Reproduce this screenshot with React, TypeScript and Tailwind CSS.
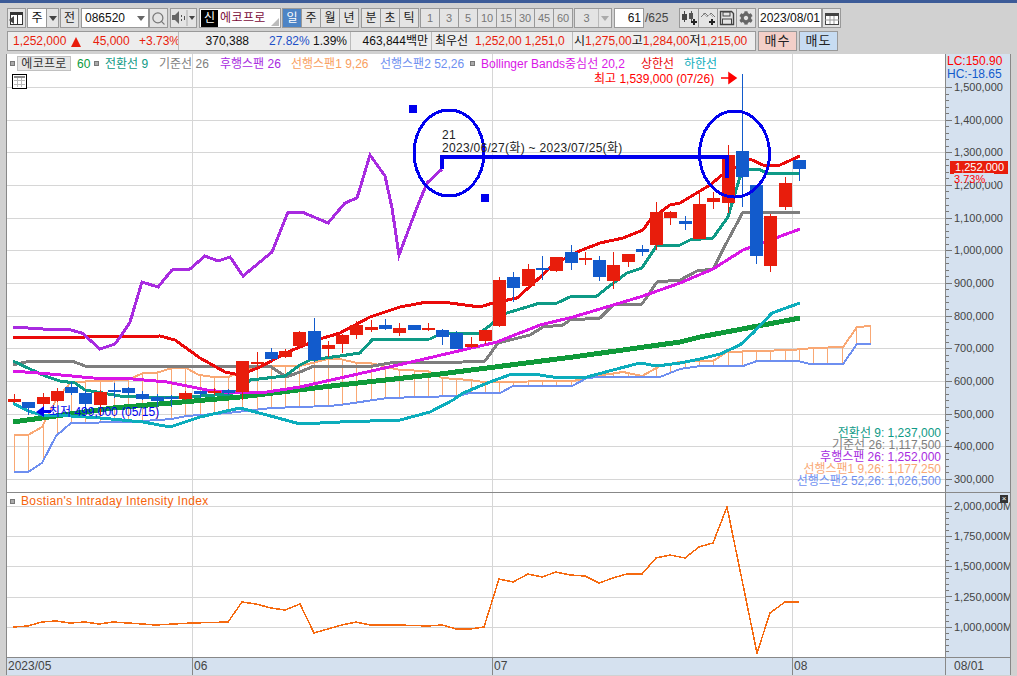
import { Search } from 'lucide-react'
import { FaCog } from 'react-icons/fa'
import type { ReactNode } from 'react'

type Pt = [number, number]

const RED = '#e81d0c'
const BLUE = '#125bcc'

const chartX = (i: number) => Math.round(14 + 14.27 * i)

// top, bottom, high, low, colour of each day (screen y)
const candles: [number, number, number, number, 'r' | 'b'][] = [
  [399, 402, 394, 403, 'r'], [402, 408, 402, 415, 'b'], [397, 404, 393, 407, 'r'], [391, 401, 388, 402, 'r'],
  [387, 393, 382, 395, 'b'], [393, 404, 390, 413, 'b'], [392, 405, 390, 416, 'r'], [390, 392, 383, 398, 'b'],
  [388, 393, 387, 395, 'b'], [394, 399, 391, 400, 'b'], [397, 401, 394, 407, 'b'], [397, 399, 395, 407, 'b'],
  [393, 399, 391, 400, 'r'], [391, 394, 391, 398, 'b'], [391, 393, 388, 395, 'r'], [390, 393, 389, 395, 'b'],
  [361, 392, 361, 400, 'r'], [362, 364, 352, 368, 'r'], [352, 359, 348, 361, 'b'], [351, 357, 349, 358, 'r'],
  [332, 346, 331, 347, 'r'], [331, 360, 318, 362, 'b'], [345, 349, 341, 357, 'r'], [335, 344, 334, 353, 'r'],
  [325, 335, 321, 339, 'r'], [327, 330, 320, 332, 'r'], [325, 329, 319, 330, 'b'], [328, 333, 323, 336, 'r'],
  [325, 330, 325, 330, 'b'], [328, 330, 323, 331, 'r'], [330, 337, 329, 345, 'b'], [333, 349, 331, 349, 'b'],
  [344, 347, 337, 348, 'r'], [330, 341, 330, 344, 'r'], [280, 326, 277, 327, 'r'], [277, 288, 272, 302, 'b'],
  [269, 286, 264, 287, 'r'], [268, 270, 256, 280, 'b'], [257, 271, 257, 272, 'r'], [252, 263, 245, 270, 'b'],
  [258, 260, 252, 265, 'r'], [260, 277, 256, 281, 'b'], [265, 281, 252, 289, 'r'], [254, 262, 254, 267, 'r'],
  [249, 252, 245, 256, 'b'], [212, 245, 202, 250, 'r'], [212, 218, 211, 225, 'r'], [221, 224, 216, 230, 'b'],
  [204, 239, 192, 239, 'r'], [198, 202, 192, 209, 'r'], [155, 203, 145, 213, 'r'], [151, 177, 74, 207, 'b'],
  [185, 256, 185, 264, 'b'], [216, 266, 214, 272, 'r'], [183, 207, 177, 210, 'r'], [160, 169, 160, 181, 'b'],
]

const span1: Pt[] = [[14, 435], [28, 435], [42, 427], [56, 400], [71, 382], [128, 380], [143, 373], [156, 373], [172, 368], [186, 368], [199, 375], [214, 377], [228, 377], [242, 372], [256, 366], [300, 366], [328, 359], [340, 359], [357, 363], [370, 363], [400, 370], [428, 371], [442, 378], [470, 380], [483, 382], [573, 381], [603, 375], [623, 372], [642, 376], [660, 366], [680, 362], [700, 361], [713, 361], [727, 352], [757, 351], [792, 350], [813, 348], [843, 347], [857, 327], [871, 326]]
const span2: Pt[] = [[14, 472], [28, 472], [42, 463], [56, 436], [71, 423], [128, 422], [172, 419], [186, 416], [228, 413], [271, 408], [328, 406], [340, 405], [387, 398], [457, 396], [470, 393], [500, 393], [513, 386], [572, 386], [587, 378], [600, 377], [660, 377], [680, 369], [700, 366], [743, 366], [757, 361], [798, 361], [810, 364], [843, 364], [857, 344], [871, 344]]

const lines: { c: string; w: number; p: Pt[] }[] = [
  { c: '#f9a874', w: 2, p: span1 },
  { c: '#6e8ff0', w: 2, p: span2 },
  { c: '#0f9a3a', w: 5, p: [[13, 422], [113, 408], [240, 397], [340, 385], [440, 374], [573, 357], [680, 342], [700, 337], [800, 318]] },
  { c: '#0cadbc', w: 3, p: [[13, 403], [28, 411], [42, 415], [71, 416], [100, 418], [143, 422], [170, 427], [200, 417], [240, 408], [267, 415], [300, 424], [340, 422], [400, 420], [430, 412], [453, 400], [463, 393], [490, 382], [512, 374], [533, 374], [553, 377], [587, 377], [613, 370], [640, 363], [657, 366], [680, 363], [700, 359], [720, 354], [740, 345], [753, 333], [772, 313], [800, 303]] },
  { c: '#7e7e7e', w: 3, p: [[13, 365], [30, 361], [72, 361], [85, 366], [270, 366], [286, 377], [300, 372], [314, 366], [373, 366], [390, 363], [463, 362], [485, 361], [498, 343], [530, 335], [543, 327], [563, 325], [570, 320], [600, 318], [613, 305], [642, 304], [657, 282], [680, 280], [697, 271], [713, 269], [728, 240], [743, 212], [800, 212]] },
  { c: '#0e9a86', w: 3, p: [[13, 361], [30, 369], [45, 376], [60, 381], [75, 383], [85, 390], [120, 396], [160, 398], [200, 396], [230, 394], [240, 390], [250, 380], [285, 376], [300, 365], [310, 360], [340, 356], [360, 353], [372, 340], [430, 339], [442, 333], [480, 333], [493, 323], [507, 313], [540, 303], [557, 303], [570, 297], [597, 296], [607, 288], [627, 273], [642, 268], [657, 245], [680, 245], [690, 240], [713, 238], [728, 217], [740, 177], [748, 169], [758, 169], [767, 173], [800, 173]] },
  { c: '#d916e6', w: 3, p: [[13, 371], [50, 374], [93, 378], [133, 379], [167, 382], [207, 390], [233, 393], [267, 392], [300, 387], [340, 378], [407, 363], [497, 342], [540, 325], [573, 317], [640, 297], [680, 283], [713, 269], [743, 250], [800, 229]] },
  { c: '#ea0a0a', w: 3, p: [[13, 338], [160, 336], [175, 340], [200, 358], [225, 372], [240, 375], [260, 367], [290, 351], [320, 339], [340, 333], [370, 317], [400, 307], [427, 302], [450, 303], [480, 307], [493, 303], [517, 298], [537, 280], [553, 265], [577, 252], [600, 243], [623, 238], [643, 230], [650, 220], [670, 205], [680, 203], [710, 185], [722, 175], [750, 159], [765, 166], [780, 165], [800, 156]] },
  { c: '#a82be0', w: 3, p: [[13, 327], [43, 329], [67, 329], [82, 333], [100, 349], [115, 344], [123, 333], [130, 322], [142, 282], [158, 287], [172, 270], [190, 269], [205, 256], [218, 261], [230, 257], [243, 276], [272, 252], [288, 212], [302, 212], [328, 223], [345, 203], [357, 198], [370, 155], [385, 176], [392, 208], [399, 255], [416, 210], [427, 183], [442, 169]] },
]

const obv: Pt[] = [[13, 627], [28, 626], [42, 622], [56, 621], [70, 623], [85, 622], [99, 624], [113, 622], [128, 623], [156, 625], [192, 623], [228, 622], [242, 602], [256, 604], [271, 608], [285, 610], [300, 604], [314, 633], [328, 629], [342, 625], [356, 622], [370, 625], [399, 625], [428, 626], [442, 625], [456, 629], [470, 629], [484, 627], [499, 579], [513, 582], [528, 574], [542, 577], [556, 572], [570, 575], [585, 576], [599, 583], [613, 578], [627, 574], [642, 574], [656, 558], [670, 555], [685, 558], [699, 547], [713, 543], [727, 507], [757, 653], [770, 613], [785, 602], [799, 602]]

const priceTicks = ['1,500,000', '1,400,000', '1,300,000', '1,200,000', '1,100,000', '1,000,000', '900,000', '800,000', '700,000', '600,000', '500,000', '400,000', '300,000']
const priceY = (i: number) => Math.round(87 + 32.65 * i)
const lowerTicks: [string, number][] = [['2,000,000M', 506], ['1,750,000M', 536], ['1,500,000M', 566], ['1,250,000M', 597], ['1,000,000M', 627]]

const legend: { t: string; c: string; w: number; box?: boolean }[] = [
  { t: '60', c: '#0a9a3c', w: 17, box: false },
  { t: '전환선 9', c: '#0e9a86', w: 54, box: true },
  { t: '기준선 26', c: '#7e7e7e', w: 61 },
  { t: '후행스팬 26', c: '#a82be0', w: 71 },
  { t: '선행스팬1 9,26', c: '#f9a060', w: 89 },
  { t: '선행스팬2 52,26', c: '#6e8ff0', w: 90 },
  { t: 'Bollinger Bands중심선 20,2', c: '#d916e6', w: 160, box: true },
  { t: '상한선', c: '#ea0a0a', w: 43 },
  { t: '하한선', c: '#0cadbc', w: 40 },
]

const summary: [string, string][] = [
  ['전환선 9: 1,237,000', '#0e9a86'],
  ['기준선 26: 1,117,500', '#7e7e7e'],
  ['후행스팬 26: 1,252,000', '#a82be0'],
  ['선행스팬1 9,26: 1,177,250', '#f9a874'],
  ['선행스팬2 52,26: 1,026,500', '#6e8ff0'],
]

function interp(p: Pt[], x: number) {
  for (let i = 1; i < p.length; i++) {
    if (x <= p[i][0]) {
      const [x0, y0] = p[i - 1]
      const [x1, y1] = p[i]
      return y0 + ((y1 - y0) * (x - x0)) / (x1 - x0)
    }
  }
  return p[p.length - 1][1]
}

const pts = (p: Pt[]) => p.map((q) => q.join(',')).join(' ')

function Btn({ className = '', children }: { className?: string; children?: ReactNode }) {
  return (
    <div className={`h-5 shrink-0 flex items-center justify-center border border-[#999] bg-[#e4e4e4] text-[12px] text-[#222] ${className}`}>
      {children}
    </div>
  )
}

function Arrow({ className = 'border-t-[#444]' }: { className?: string }) {
  return <div className={`w-0 h-0 border-x-[4px] border-x-transparent border-t-[5px] ${className}`} />
}

function Square({ className = '' }: { className?: string }) {
  return <div className={`w-[5px] h-[5px] shrink-0 bg-[#aaa] border border-[#777] ${className}`} />
}

function Toolbar() {
  return (
    <div className="flex items-center pl-[7px] mt-[5px] h-5">
      <Btn className="w-[19px]">
        <svg width="15" height="15" viewBox="0 0 15 15">
          <rect x="1.5" y="1.5" width="12" height="12" fill="#fff" stroke="#333" />
          <rect x="1" y="1" width="13" height="3" fill="#333" />
          <rect x="8" y="4" width="1" height="9" fill="#333" />
          <path d="M0 9l5-4v8z" fill="#444" />
        </svg>
      </Btn>
      <div className="ml-px w-[32px] h-5 shrink-0 flex border border-[#999] bg-white">
        <div className="w-[18px] flex items-center justify-center text-[12px] text-[#111]">주</div>
        <div className="flex-1 bg-[#e4e4e4] border-l border-[#999] flex items-center justify-center">
          <Arrow />
        </div>
      </div>
      <Btn className="w-[19px] ml-[1px]">전</Btn>
      <div className="ml-[2px] w-[68px] h-5 shrink-0 flex items-center justify-between pl-[3px] pr-[3px] border border-[#999] bg-white text-[12px] text-[#111]">
        086520
        <Arrow className="border-t-[#666]" />
      </div>
      <Btn className="w-[19px]">
        <Search size={15} color="#777" strokeWidth={2} />
      </Btn>
      <Btn className="w-[27px] ml-[2px]">
        <svg width="25" height="16" viewBox="0 0 25 16">
          <path d="M1 5h3l4-4v13l-4-4H1z" fill="#666" />
          <rect x="10" y="5" width="1" height="2" fill="#555" />
          <rect x="10" y="9" width="1" height="2" fill="#555" />
          <rect x="13" y="6" width="1" height="4" fill="#555" />
          <rect x="15.5" y="0" width="1" height="16" fill="#aaa" />
          <path d="M18 6h6l-3 4z" fill="#444" />
        </svg>
      </Btn>
      <div className="ml-[2px] w-[82px] h-5 shrink-0 flex items-center border border-[#999] bg-white relative">
        <div className="w-[17px] h-[17px] ml-px bg-black text-white text-[12px] flex items-center justify-center">신</div>
        <div className="ml-[2px] text-[12px] text-[#7a0b3a] tracking-[0.4px]">에코프로</div>
        <div className="absolute right-px bottom-px w-0 h-0 border-l-[8px] border-l-transparent border-b-[8px] border-b-[#bbb]" />
      </div>
      <div className="ml-[1px] flex">
        <Btn className="w-[20px] !bg-[#4d84c5] !text-white">일</Btn>
        {['주', '월', '년'].map((t) => (
          <Btn key={t} className="w-[20px] -ml-px">
            {t}
          </Btn>
        ))}
      </div>
      <div className="ml-[2px] flex">
        {['분', '초', '틱'].map((t) => (
          <Btn key={t} className="w-[20px] -ml-px first:ml-0">
            {t}
          </Btn>
        ))}
      </div>
      <div className="ml-[1px] flex">
        {['1', '3', '5', '10', '15', '30', '45', '60'].map((t) => (
          <Btn key={t} className="w-[20px] -ml-px first:ml-0 !text-[11px] !text-[#777]">
            {t}
          </Btn>
        ))}
      </div>
      <div className="ml-[1px] w-[38px] h-5 shrink-0 flex border border-[#999] bg-[#e4e4e4] text-[#777] text-[11px]">
        <div className="flex-1 flex items-center justify-center">3</div>
        <div className="w-[13px] border-l border-[#bbb] flex items-center justify-center">
          <Arrow className="border-t-[#aaa]" />
        </div>
      </div>
      <div className="ml-[2px] w-[30px] h-5 shrink-0 flex items-center justify-end pr-[2px] border border-[#999] bg-white text-[12px] text-[#111]">61</div>
      <div className="ml-px w-[34px] shrink-0 text-[12px] text-[#444]">/625</div>
      <div className="flex">
        <Btn className="w-[20px]">
          <svg width="17" height="16" viewBox="0 0 17 16">
            <rect x="1" y="4" width="5" height="6" fill="#444" />
            <rect x="3" y="1" width="1" height="11" fill="#444" />
            <rect x="8" y="3" width="4" height="6" fill="#555" />
            <rect x="10" y="1" width="1" height="11" fill="#555" />
            <path d="M13 9v6M10 12h6" stroke="#222" strokeWidth="2" />
          </svg>
        </Btn>
        <Btn className="w-[20px] -ml-px">
          <svg width="17" height="16" viewBox="0 0 17 16">
            <path d="M1 7l4-4 3 3 3-3 4 4" fill="none" stroke="#777" />
            <path d="M3 3l4 4 3-3 3 3" fill="none" stroke="#aaa" />
            <path d="M12 9v6M9 12h6" stroke="#222" strokeWidth="2" />
          </svg>
        </Btn>
        <Btn className="w-[20px] -ml-px">
          <svg width="16" height="16" viewBox="0 0 16 16">
            <path d="M1.5 1.5h11l2 2v11h-13z" fill="#e4e4e4" stroke="#444" strokeWidth="1.4" />
            <rect x="4" y="2" width="7" height="4" fill="none" stroke="#444" />
            <rect x="3.5" y="9" width="9" height="5.5" fill="none" stroke="#444" />
          </svg>
        </Btn>
        <Btn className="w-[20px] -ml-px">
          <FaCog size={14} color="#666" />
        </Btn>
      </div>
      <div className="ml-[2px] w-[64px] h-5 shrink-0 flex items-center justify-center border border-[#999] bg-white text-[12px] text-[#111]">2023/08/01</div>
      <Btn className="w-[19px]">
        <svg width="14" height="13" viewBox="0 0 14 13">
          <rect x="0.5" y="1.5" width="13" height="11" fill="#fff" stroke="#444" />
          <rect x="0" y="1" width="14" height="3" fill="#444" />
          <path d="M0 8h14M5 4v8M9 4v8" stroke="#999" />
        </svg>
      </Btn>
    </div>
  )
}

function QuoteBar() {
  return (
    <div className="flex items-center pl-[7px] mt-[3px] h-5">
      <div className="w-[749px] h-5 shrink-0 flex border border-[#999] bg-[#ededed] text-[12px] leading-[18px] whitespace-nowrap">
        <div className="w-[171px] shrink-0 flex border-r border-[#bbb] text-[#e81d0c] overflow-hidden">
          <span className="ml-[5px] w-[58px] shrink-0">1,252,000</span>
          <span className="w-0 h-0 mt-[5px] shrink-0 border-x-[5px] border-x-transparent border-b-[10px] border-b-[#e81d0c]" />
          <span className="ml-[12px] w-[40px] shrink-0">45,000</span>
          <span className="ml-[5px] w-[42px] shrink-0 text-right">+3.73%</span>
        </div>
        <div className="w-[172px] shrink-0 flex border-r border-[#bbb] text-[#111]">
          <span className="ml-[26px] w-[44px] text-right">370,388</span>
          <span className="ml-[20px] w-[38px] text-[#1d50c8]">27.82%</span>
          <span className="ml-[6px] w-[34px] text-right">1.39%</span>
        </div>
        <div className="w-[81px] shrink-0 border-r border-[#bbb] text-[#111] text-right pr-[3px]">463,844백만</div>
        <div className="w-[141px] shrink-0 flex border-r border-[#bbb] text-[#e81d0c] overflow-hidden">
          <span className="ml-[3px] w-[40px] shrink-0 text-[#111]">최우선</span>
          <span className="shrink-0">1,252,00</span>
          <span className="ml-[3px] shrink-0">1,251,0</span>
        </div>
        <div className="flex-1 flex text-[#e81d0c] overflow-hidden">
          <span className="text-[#111] ml-[1px]">시</span>
          <span className="shrink-0">1,275,00</span>
          <span className="text-[#111]">고</span>
          <span className="shrink-0">1,284,00</span>
          <span className="text-[#111]">저</span>
          <span className="shrink-0">1,215,00</span>
        </div>
      </div>
      <Btn className="ml-[2px] w-[39px] !bg-[#f3cfc8] !text-[13px] tracking-[1px]">매수</Btn>
      <Btn className="ml-[2px] w-[39px] !bg-[#c7dcf2] !text-[13px] tracking-[1px]">매도</Btn>
    </div>
  )
}

function MainPlot() {
  return (
    <div className="relative h-[438px] bg-white overflow-hidden text-[12px]">
      <svg width="938" height="438" viewBox="7 54 938 438" className="block">
        <g shapeRendering="crispEdges">
          {priceTicks.map((t, i) => (
            <line key={t} x1="7" x2="945" y1={priceY(i)} y2={priceY(i)} stroke="#d6d6d6" />
          ))}
          {[192, 492, 792].map((x) => (
            <line key={x} x1={x} x2={x} y1="54" y2="492" stroke="#d6d6d6" />
          ))}
          {Array.from({ length: 61 }, (_, i) => {
            const x = chartX(i)
            return <line key={i} x1={x} x2={x} y1={interp(span1, x)} y2={interp(span2, x)} stroke="#f9a874" />
          })}
          {lines.map((l) => (
            <polyline key={l.c} points={pts(l.p)} fill="none" stroke={l.c} strokeWidth={l.w} />
          ))}
          {candles.map(([top, bottom, high, low, c], i) => {
            const x = chartX(i)
            const color = c === 'r' ? RED : BLUE
            return (
              <g key={i} fill={color}>
                <rect x={x} y={high} width="1" height={low - high} />
                <rect x={x - 6} y={top} width="13" height={bottom - top} />
              </g>
            )
          })}
          <polyline points="442,169 442,157 727,157 727,178" fill="none" stroke="#0000ee" strokeWidth="4" />
          <rect x="409" y="105" width="8" height="8" fill="#0000ee" />
          <rect x="481" y="194" width="8" height="8" fill="#0000ee" />
          <ellipse cx="449" cy="153" rx="35" ry="43" fill="none" stroke="#0000ee" strokeWidth="3" />
          <ellipse cx="734.5" cy="154" rx="35" ry="43" fill="none" stroke="#0000ee" strokeWidth="3" />
        </g>
        <path d="M721 78h9M729 73l7 5-7 5z" fill="#f00" stroke="#f00" strokeWidth="1.5" />
        <path d="M36 412l8-6v4h7v3h-7v4z" fill="#0000ee" />
      </svg>

      {/* legend row */}
      <div className="absolute left-[3px] top-[2px] flex items-center h-[15px] whitespace-nowrap">
        <Square />
        <div className="ml-[2px] w-[54px] h-[15px] shrink-0 flex items-center justify-center bg-[#e6e6e6] border border-[#c0c0c0] text-[#333] tracking-[0.3px]">
          에코프로
        </div>
        <div className="flex items-center ml-[6px]">
          {legend.map((l) => (
            <div key={l.t} className="flex items-center shrink-0" style={{ width: l.w + (l.box ? 11 : 0) }}>
              {l.box && <Square className="mr-[6px]" />}
              <span style={{ color: l.c }}>{l.t}</span>
            </div>
          ))}
        </div>
      </div>
      <div className="absolute left-[5px] top-[20px] w-[15px] h-[15px] border border-black bg-white p-px">
        <div className="w-full h-full bg-[#bbb] grid grid-cols-3 grid-rows-3 gap-px border-t-2 border-[#888]">
          {Array.from({ length: 9 }, (_, i) => (
            <div key={i} className="bg-white" />
          ))}
        </div>
      </div>

      <div className="absolute left-[435px] top-[75px] leading-[13px] text-[#222] whitespace-nowrap tracking-[0.3px]">
        <div>21</div>
        <div>2023/06/27(화) ~ 2023/07/25(화)</div>
      </div>
      <div className="absolute left-[587px] top-[16px] text-[#f00] whitespace-nowrap">최고 1,539,000 (07/26)</div>
      <div className="absolute left-[42px] top-[349px] text-[#0000ee] whitespace-nowrap">최저 499,000 (05/15)</div>
      <div className="absolute right-[4px] top-[373px] flex flex-col items-end leading-[12px] whitespace-nowrap">
        {summary.map(([t, c]) => (
          <div key={t} className="h-3" style={{ color: c }}>
            {t}
          </div>
        ))}
      </div>
    </div>
  )
}

function LowerPlot() {
  return (
    <div className="relative h-[164px] bg-white overflow-hidden border-t border-[#888] box-content">
      <svg width="938" height="164" viewBox="7 493 938 164" className="block">
        <g shapeRendering="crispEdges">
          {lowerTicks.map(([t, y]) => (
            <line key={t} x1="7" x2="945" y1={y} y2={y} stroke="#d6d6d6" />
          ))}
          {[192, 492, 792].map((x) => (
            <line key={x} x1={x} x2={x} y1="493" y2="657" stroke="#d6d6d6" />
          ))}
          <polyline points={pts(obv)} fill="none" stroke="#f5690f" strokeWidth="1.5" />
        </g>
      </svg>
      <div className="absolute left-[3px] top-[1px] flex items-center h-[14px] whitespace-nowrap">
        <Square />
        <span className="ml-[6px] text-[12px] text-[#f5640a] tracking-[0.35px]">Bostian's Intraday Intensity Index</span>
      </div>
    </div>
  )
}

function PriceAxis() {
  return (
    <div className="relative h-[438px] bg-[#d5e1ef] border-l border-[#888] overflow-hidden text-[#444]">
      <svg width="65" height="438" viewBox="945 54 65 438" className="absolute left-0 top-0">
        <g shapeRendering="crispEdges" stroke="#777">
          {Array.from({ length: 66 }, (_, i) => {
            const y = Math.round(87 + 6.53 * i)
            return <line key={i} x1="945" x2={i % 5 === 0 ? 951 : 948} y1={y} y2={y} />
          })}
        </g>
      </svg>
      <div className="absolute left-px top-[1px] leading-[13px] whitespace-nowrap text-[12px]">
        <div className="text-[#f00]">LC:150.90</div>
        <div className="text-[#125bcc]">HC:-18.65</div>
      </div>
      {priceTicks.map((t, i) => (
        <span key={t} className="absolute left-[8px] leading-[14px]" style={{ top: priceY(i) - 54 - 7 }}>
          {t}
        </span>
      ))}
      <div className="absolute left-[4px] top-[107px] w-[58px] h-[13px] bg-[#e81d0c] text-white leading-[13px] text-right pr-[4px]">1,252,000</div>
      <div className="absolute left-[8px] top-[119px] leading-[12px] text-[#f00] bg-[#d5e1ef] w-[40px] h-[9px]">3.73%</div>
    </div>
  )
}

function LowerAxis() {
  return (
    <div className="relative h-[164px] bg-[#d5e1ef] border-l border-[#888] border-t overflow-hidden text-[#444] box-content">
      <svg width="65" height="164" viewBox="945 493 65 164" className="absolute left-0 top-0">
        <g shapeRendering="crispEdges" stroke="#777">
          {Array.from({ length: 27 }, (_, i) => {
            const y = Math.round(506 + 6.03 * i)
            return <line key={i} x1="945" x2={i % 5 === 0 ? 951 : 948} y1={y} y2={y} />
          })}
        </g>
      </svg>
      {lowerTicks.map(([t, y]) => (
        <span key={t} className="absolute left-[8px] leading-[14px] whitespace-nowrap" style={{ top: y - 493 - 7 }}>
          {t}
        </span>
      ))}
      <div className="absolute right-[2px] top-[2px] w-2 h-2 bg-[#333] text-white text-[8px] leading-[8px] text-center">×</div>
    </div>
  )
}

function DateAxis() {
  return (
    <>
      <div className="relative h-[18px] bg-[#d5e1ef] border-t border-[#888] text-[#444] text-[12px] leading-[16px] overflow-hidden">
        <span className="absolute left-px">2023/05</span>
        <span className="absolute left-[185px] pl-px border-l border-[#888] h-full">06</span>
        <span className="absolute left-[485px] pl-px border-l border-[#888] h-full">07</span>
        <span className="absolute left-[785px] pl-px border-l border-[#888] h-full">08</span>
      </div>
      <div className="h-[18px] bg-[#d5e1ef] border-t border-l border-[#888] text-[#444] text-[12px] leading-[16px] pl-[8px]">08/01</div>
    </>
  )
}

export default function App() {
  return (
    <div className="w-[1017px] h-[676px] overflow-hidden bg-[#d1d1d1] font-['Liberation_Sans','Noto_Sans_CJK_KR',sans-serif] text-[11px]">
      <div className="h-[3px] bg-[#3c5b98]" />
      <Toolbar />
      <QuoteBar />
      <div className="mt-[3px] ml-[6px] w-[1005px] border-x border-[#888] grid grid-cols-[938px_65px]">
        <MainPlot />
        <PriceAxis />
        <LowerPlot />
        <LowerAxis />
        <DateAxis />
      </div>
    </div>
  )
}
